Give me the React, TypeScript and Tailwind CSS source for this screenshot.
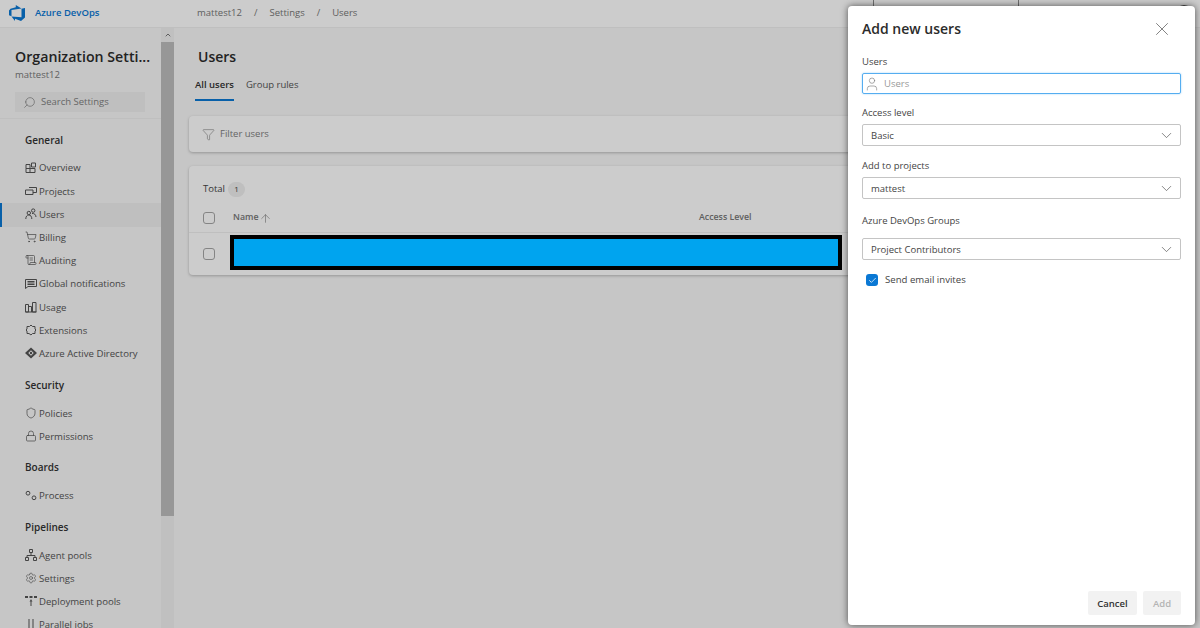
import { ChevronDown, ChevronUp, Filter, Lock, Search, Settings, ShoppingCart, User, X, Check, ArrowUp, ScrollText, Shield } from 'lucide-react';
import React from 'react';

const font = { fontFamily: '"Open Sans", "Noto Sans", sans-serif' };

function Svg({ children }: { children: React.ReactNode }) {
    return (
        <svg width="12" height="12" viewBox="0 0 12 12" fill="none" stroke="currentColor" strokeWidth="1">
            {children}
        </svg>
    );
}

const OverviewIcon = () => <Svg><path d="M1 2.500h4v4H1zM1 6.500v4h4v-4M5 6.500h5v4H5M6.500 1h4v4h-4z" /></Svg>;
const ProjectsIcon = () => <Svg><path d="M4 2.500h7.500v5H8M.5 5H8v4.500H.5z" /></Svg>;
const PeopleIcon = () => <Svg><circle cx="8.200" cy="2.600" r="1.700" /><circle cx="3.800" cy="5" r="1.700" /><path d="M.8 11c0-2.500 1.200-4 3-4s3 1.500 3 4M7 5.500c2.200-.3 3.800 1 4 3.500" /></Svg>;
const NotifyIcon = () => <Svg><path d="M.5 1.500h11v7H3L.5 10.500zM2.500 3.500h7M2.500 5h7M2.500 6.500h7" /></Svg>;
const UsageIcon = () => <Svg><path d="M.5 11V3.500h3V11zM3.500 11V5.500h3V11M7.500 11V1.500h3.500V11zM.5 11h11" /></Svg>;
const ExtensionIcon = () => <Svg><path d="M6 1l1.500 1.500L10 2.500V5l1 1-1 1v2.500H7.500L6 11 4 9.500H2V7L1 6l1-1V2.500h2.500z" /></Svg>;
const DirectoryIcon = () => (
    <svg width="13" height="12" viewBox="0 0 13 12" fill="currentColor">
        <path d="M6.500 0l6.500 6-6.500 6L0 6zm0 3L3.500 6l3 3 3-3z" />
        <circle cx="6.500" cy="6" r="1.300" />
    </svg>
);
const ProcessIcon = () => <Svg><circle cx="3" cy="3.200" r="1.900" /><circle cx="9" cy="7.800" r="1.900" /></Svg>;
const AgentIcon = () => <Svg><path d="M4.500.5h3v3h-3zM6 3.500v3M2 8.500v-2h8v2M.5 8.500h3v3h-3zM8.500 8.500h3v3h-3z" /></Svg>;
const DeployIcon = () => (
    <svg width="12" height="12" viewBox="0 0 12 12" fill="currentColor">
        <path d="M0 1h3v2H0zM4.500 1h3v2h-3zM9 1h3v2H9zM5.500 5L6 4l.5 1 1 1.500h-1V11h-1V6.500h-1z" />
    </svg>
);
const ParallelIcon = () => <Svg><path d="M4 1v10M8 1v10" /></Svg>;

const iconClass = 'w-3 h-3';

const navGroups = [
    {
        title: 'General',
        top: 'pt-[11px]',
        gap: 'mt-[7px]',
        items: [
            { label: 'Overview', icon: <OverviewIcon /> },
            { label: 'Projects', icon: <ProjectsIcon /> },
            { label: 'Users', icon: <PeopleIcon />, active: true },
            { label: 'Billing', icon: <ShoppingCart className={iconClass} strokeWidth={1.4} /> },
            { label: 'Auditing', icon: <ScrollText className={iconClass} strokeWidth={1.4} /> },
            { label: 'Global notifications', icon: <NotifyIcon /> },
            { label: 'Usage', icon: <UsageIcon /> },
            { label: 'Extensions', icon: <ExtensionIcon /> },
            { label: 'Azure Active Directory', icon: <DirectoryIcon /> },
        ],
    },
    {
        title: 'Security',
        top: 'pt-[9px]',
        gap: 'mt-[8px]',
        items: [
            { label: 'Policies', icon: <Shield className={iconClass} strokeWidth={1.4} /> },
            { label: 'Permissions', icon: <Lock className={iconClass} strokeWidth={1.4} /> },
        ],
    },
    {
        title: 'Boards',
        top: 'pt-[8px]',
        gap: 'mt-[8px]',
        items: [{ label: 'Process', icon: <ProcessIcon /> }],
    },
    {
        title: 'Pipelines',
        top: 'pt-[9px]',
        gap: 'mt-[7px]',
        items: [
            { label: 'Agent pools', icon: <AgentIcon /> },
            { label: 'Settings', icon: <Settings className={iconClass} strokeWidth={1.2} /> },
            { label: 'Deployment pools', icon: <DeployIcon /> },
            { label: 'Parallel jobs', icon: <ParallelIcon /> },
        ],
    },
];

function Sidebar() {
    return (
        <div className="w-[174px] flex-shrink-0 flex overflow-hidden bg-[#f8f8f8]">
            <div className="w-[161px] flex-shrink-0">
                <div className="pl-[15px] pt-[19px] h-[91px] border-b border-[#efefef]">
                    <div className="text-[14.200px] leading-[20px] font-semibold text-[#2b2b2b] whitespace-nowrap">Organization Setti...</div>
                    <div className="h-[14px] text-[9.500px] leading-[16px] text-[#777]">mattest12</div>
                    <div className="mt-[11px] w-[130px] h-[20px] bg-[#efefef] flex items-center pl-[8px] gap-[5px] text-[9.500px] text-[#808080]">
                        <Search className="w-[13px] h-[13px] -scale-x-100" strokeWidth={1.3} />
                        Search Settings
                    </div>
                </div>
                {navGroups.map((group) => (
                    <div key={group.title} className={group.top}>
                        <div className="pl-[25px] h-[20px] leading-[20px] text-[10px] font-semibold text-[#333]">{group.title}</div>
                        <div className={group.gap}>
                            {group.items.map((item) => (
                                <div
                                    key={item.label}
                                    className={`h-[23.200px] flex items-center pl-[23px] gap-[2px] text-[9.600px] text-[#555] whitespace-nowrap border-l-2 ${item.active ? 'bg-[#efefef] border-[#0a78d4]' : 'border-transparent'}`}
                                >
                                    <span className="w-[12px] h-[12px] flex items-center justify-center -translate-y-[1px]">{item.icon}</span>
                                    <span>{item.label}</span>
                                </div>
                            ))}
                        </div>
                    </div>
                ))}
            </div>
            <div className="w-[13px] flex-shrink-0 bg-[#f1f1f1] flex flex-col">
                <div className="h-[14px] flex items-center justify-center text-[#777]">
                    <ChevronUp className="w-2 h-2" strokeWidth={3} />
                </div>
                <div className="h-[474px] bg-[#bdbdbd]" />
            </div>
        </div>
    );
}

function Main() {
    return (
        <div className="flex-1 bg-[#f8f8f8] pl-[15px] pr-[10px]">
            <div className="pl-[9px] pt-[18px] text-[14px] leading-[22px] font-semibold text-[#2b2b2b]">Users</div>
            <div className="flex gap-[12px] pl-[6px] mt-[6px] text-[9.500px]">
                <div className="h-[27px] pt-[4px] border-b-2 border-[#0a78d4] font-semibold text-[#333]">All users</div>
                <div className="pt-[4px] text-[#555]">Group rules</div>
            </div>
            <div className="mt-[15px] h-[36px] bg-white rounded-[4px] shadow-[0_1px_3px_rgba(0,0,0,0.25)] flex items-center pl-[13px] gap-[5px] text-[9.500px] text-[#808080]">
                <Filter className="w-[13px] h-[13px]" strokeWidth={1.1} />
                Filter users
            </div>
            <div className="mt-[14px] bg-white rounded-[4px] shadow-[0_1px_3px_rgba(0,0,0,0.25)] h-[109px]">
                <div className="flex items-center pl-[14px] pt-[10px] h-[36px] text-[9.500px] text-[#444]">
                    Total
                    <span className="ml-[3px] w-[17px] h-[15px] rounded-full bg-[#efefef] text-[8px] flex items-center justify-center">1</span>
                </div>
                <div className="flex items-center h-[31px] pl-[14px] pt-[2px] text-[8.800px] font-semibold text-[#777] border-b border-[#efefef]">
                    <span className="w-[12px] h-[12px] border border-[#a6a6a6] rounded-[3px]" />
                    <div className="ml-[18px] w-[466px] flex items-center">
                        Name
                        <ArrowUp className="w-[13px] h-[13px] ml-[1px]" strokeWidth={1.1} />
                    </div>
                    <span>Access Level</span>
                </div>
                <div className="flex items-center pl-[14px] pt-[2px]">
                    <span className="mt-[2px] w-[12px] h-[12px] border border-[#a6a6a6] rounded-[3px]" />
                    <div className="relative z-10 ml-[15px] w-[612px] h-[35px] bg-[#00a4ef] border-[4px] border-black" />
                </div>
            </div>
        </div>
    );
}

function Field({ label, value, className }: { label: string; value: string; className: string }) {
    return (
        <div className={className}>
            <div className="h-[14px] text-[9.500px] leading-[16px] text-[#444]">{label}</div>
            <div className={`flex items-center justify-between h-[22px] pl-[8px] pr-[5px] border border-[#c4c4c4] rounded-[2px] text-[9.500px] text-[#444] ${label === 'Azure DevOps Groups' ? 'mt-[11px]' : 'mt-[5px]'}`}>
                <span className="pt-[2px]">{value}</span>
                <ChevronDown className="w-[17px] h-[17px] text-[#555]" strokeWidth={1} />
            </div>
        </div>
    );
}

function AddUsersPanel() {
    return (
        <div className="absolute z-20 left-[848px] top-[6px] w-[347px] h-[619px] bg-white rounded-[4px] shadow-[0_0_7px_rgba(0,0,0,0.6)] flex flex-col px-[14px]">
            <div className="flex items-center justify-between pt-[10px] h-[35px] pr-[11px]">
                <div className="text-[14px] leading-[22px] font-semibold text-[#2b2b2b]">Add new users</div>
                <X className="w-[22px] h-[22px] text-[#555] translate-x-[3px]" strokeWidth={0.8} />
            </div>
            <div className="mt-[13px] h-[14px] text-[9.500px] leading-[16px] text-[#444]">Users</div>
            <div className="mt-[5px] h-[21px] flex items-center pl-[1px] gap-[3px] border border-[#55adf0] rounded-[2px] shadow-[0_0_2px_#9ed0f5] text-[9.500px] text-[#9a9a9a]">
                <User className="w-[16px] h-[16px] text-[#808080]" strokeWidth={1} />
                <span className="ml-[1px] pt-[2px]">Users</span>
            </div>
            <Field className="mt-[11px]" label="Access level" value="Basic" />
            <Field className="mt-[12px]" label="Add to projects" value="mattest" />
            <Field className="mt-[14px]" label="Azure DevOps Groups" value="Project Contributors" />
            <div className="mt-[13px] flex items-center pl-[4px] gap-[7px] text-[9.600px] text-[#444]">
                <span className="w-[12px] h-[12px] rounded-[3px] bg-[#0a78d4] flex items-center justify-center">
                    <Check className="w-[9px] h-[9px] text-white" strokeWidth={2} />
                </span>
                Send email invites
            </div>
            <div className="mt-auto mb-[10px] flex justify-end gap-[6px] text-[9.500px]">
                <div className="w-[49px] h-[24px] pt-[2px] bg-[#f2f2f2] rounded-[2px] flex items-center justify-center font-semibold text-[#333]">Cancel</div>
                <div className="w-[38px] h-[24px] pt-[2px] bg-[#f2f2f2] rounded-[2px] flex items-center justify-center font-semibold text-[#b4b4b4]">Add</div>
            </div>
        </div>
    );
}

export default function App() {
    return (
        <div className="relative w-[1200px] h-[628px] overflow-hidden flex flex-col bg-[#f8f8f8]" style={font}>
            <div className="h-[28px] flex-shrink-0 bg-white border-b border-[#efefef] flex items-center text-[9.500px]">
                <svg className="ml-[9px] -translate-y-[1px]" width="16" height="16" viewBox="0 0 16 16" fill="#0a78d4">
                    <path d="M16 3v9.500L12 16l-6-2.200v2.200L2.500 11.500 12.500 12.300V3.800zM12.500 3.500L6.800 0v2.200L1.500 3.700 0 5.500v4.800l2.500 1V5z" />
                </svg>
                <span className="ml-[10px] font-semibold text-[#0a78d4] w-[162px] pb-[1px]">Azure DevOps</span>
                <span className="text-[#777] pb-[1px]">mattest12</span>
                <span className="text-[#777] mx-[12px] pb-[1px]">/</span>
                <span className="text-[#777] pb-[1px]">Settings</span>
                <span className="text-[#777] mx-[12px] pb-[1px]">/</span>
                <span className="text-[#777] pb-[1px]">Users</span>
                <div className="ml-auto flex items-center h-full">
                    <div className="w-px h-full bg-[#8a8a8a]" />
                    <div className="w-[144px]" />
                    <div className="w-px h-full bg-[#8a8a8a]" />
                    <div className="w-[156px]" />
                    <div className="w-[18px] h-[18px] rounded-full bg-[#555] mr-[7px]" />
                </div>
            </div>
            <div className="flex flex-1 min-h-0">
                <Sidebar />
                <Main />
            </div>
            <div className="absolute inset-0 z-[5] bg-black/20" />
            <AddUsersPanel />
        </div>
    );
}
